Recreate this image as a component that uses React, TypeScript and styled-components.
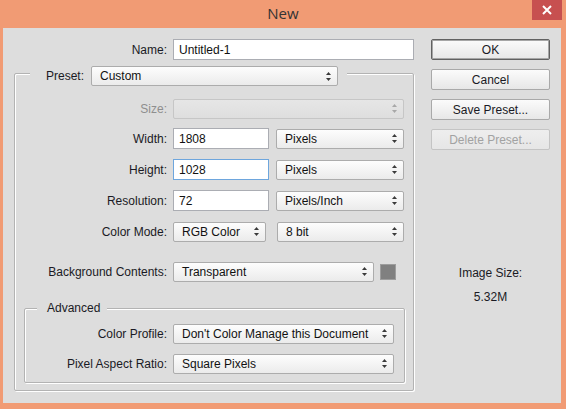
import styled, { createGlobalStyle } from 'styled-components'

const GlobalStyle = createGlobalStyle`
  html, body {
    margin: 0;
    padding: 0;
    background: #f19b74;
  }
  body {
    width: 566px;
    height: 409px;
    overflow: hidden;
    font-family: "Liberation Sans", Arial, sans-serif;
  }
`

const Window = styled.div`
  width: 566px;
  height: 409px;
  background: #f19b74;
  display: flex;
  flex-direction: column;
`

const TitleBar = styled.div`
  height: 28px;
  display: grid;
  grid-template-columns: 1fr auto 1fr;
  align-items: center;
`

const Title = styled.div`
  grid-column: 2;
  font-family: "Open Sans", "Noto Sans", sans-serif;
  font-size: 15px;
  color: #333;
  margin-top: -2px;
`

const CloseButton = styled.div`
  grid-column: 3;
  justify-self: end;
  align-self: start;
  width: 30px;
  height: 20px;
  margin-right: 4px;
  background: #c75050;
  display: flex;
  align-items: center;
  justify-content: center;
`

const Body = styled.div`
  margin: 0 5px 0 3px;
  height: 375px;
  background: #dddddd;
  display: flex;
`

const LeftColumn = styled.div`
  width: 411px;
  padding-top: 11px;
  display: flex;
  flex-direction: column;
`

const NameRow = styled.div`
  margin-left: 11px;
  display: flex;
  align-items: center;
  gap: 6px;
  height: 21px;
`

const Label = styled.div<{ $width: number; $disabled?: boolean }>`
  width: ${p => p.$width}px;
  flex-shrink: 0;
  text-align: right;
  font-size: 12px;
  color: ${p => (p.$disabled ? '#8e8e8e' : '#1a1a24')};
  white-space: nowrap;
`

const TextField = styled.div<{ $width?: number; $focused?: boolean }>`
  box-sizing: border-box;
  ${p => (p.$width ? `width: ${p.$width}px;` : 'flex: 1;')}
  height: 21px;
  background: #fff;
  border: 1px solid ${p => (p.$focused ? '#6ea6dd' : '#abadb3')};
  padding: 0 5px;
  display: flex;
  align-items: center;
  font-size: 12px;
  color: #111;
`

const Select = styled.div<{ $width: number; $disabled?: boolean }>`
  box-sizing: border-box;
  width: ${p => p.$width}px;
  height: 20px;
  border: 1px solid ${p => (p.$disabled ? '#c6c6c6' : '#acacac')};
  border-radius: 2px;
  background: ${p =>
    p.$disabled ? 'linear-gradient(#e6e6e6, #dedede)' : 'linear-gradient(#fdfdfd, #ebebeb)'};
  padding: 0 6px 0 8px;
  display: flex;
  align-items: center;
  justify-content: space-between;
  font-size: 12px;
  color: #111;
  flex-shrink: 0;
`

const Group = styled.div`
  box-sizing: border-box;
  margin: 13px 0 0 11px;
  width: 400px;
  border: 1px solid #b3b3b3;
  border-radius: 2px;
  box-shadow: inset 1px 1px 0 #fff, 1px 1px 0 #fff;
  display: flex;
  flex-direction: column;
  padding-bottom: 7px;
`

const GroupHeader = styled.div`
  align-self: flex-start;
  margin: -8px 0 0 15px;
  padding: 0 9px 0 16px;
  height: 20px;
  background: #dddddd;
  display: flex;
  align-items: center;
  gap: 7px;
`

const HeaderLabel = styled.div`
  font-size: 12px;
  color: #1a1a24;
`

const Row = styled.div<{ $top: number }>`
  margin-top: ${p => p.$top}px;
  height: 21px;
  display: flex;
  align-items: center;
`

const Controls = styled.div<{ $width: number; $spread?: boolean }>`
  width: ${p => p.$width}px;
  margin-left: 6px;
  display: flex;
  align-items: center;
  justify-content: ${p => (p.$spread ? 'space-between' : 'flex-start')};
  gap: 6px;
`

const Swatch = styled.div`
  width: 16px;
  height: 16px;
  box-sizing: border-box;
  background: #808080;
  border: 1px solid #9d9d9d;
`

const SubGroup = styled.div`
  box-sizing: border-box;
  margin: 26px 8px 0 9px;
  border: 1px solid #b3b3b3;
  border-radius: 2px;
  box-shadow: inset 1px 1px 0 #fff, 1px 1px 0 #fff;
  display: flex;
  flex-direction: column;
  padding-bottom: 8px;
`

const SubLegend = styled.div`
  align-self: flex-start;
  margin: -8px 0 0 12px;
  padding: 0 7px 0 10px;
  height: 14px;
  line-height: 14px;
  background: #dddddd;
  font-size: 12px;
  color: #1a1a24;
`

const RightColumn = styled.div`
  padding: 11px 0 0 17px;
  width: 119px;
  display: flex;
  flex-direction: column;
  gap: 9px;
`

const Button = styled.div<{ $primary?: boolean; $disabled?: boolean }>`
  box-sizing: border-box;
  height: 21px;
  border-radius: 2px;
  display: flex;
  align-items: center;
  justify-content: center;
  font-size: 12px;
  color: ${p => (p.$disabled ? '#a2a2a2' : '#1a1a24')};
  background: ${p =>
    p.$disabled ? 'linear-gradient(#eeeeee, #e6e6e6)' : 'linear-gradient(#fbfbfb, #e7e7e7)'};
  border: 1px solid ${p => (p.$primary ? '#616161' : p.$disabled ? '#c4c4c4' : '#a9a9a9')};
  box-shadow: ${p => (p.$primary ? 'inset 0 0 0 1px #a6a6a6' : 'none')};
`

const ImageSize = styled.div`
  margin-top: 107px;
  display: flex;
  flex-direction: column;
  align-items: center;
  gap: 10px;
  font-size: 12px;
  color: #1a1a24;
  line-height: 14px;
`

const Arrows = ({ disabled }: { disabled?: boolean }) => (
  <svg width="5" height="9" viewBox="0 0 5 9">
    <polygon points="2.5,0 5,3 0,3" fill={disabled ? '#a8a8a8' : '#3a3a3a'} />
    <polygon points="0,6 5,6 2.5,9" fill={disabled ? '#a8a8a8' : '#3a3a3a'} />
  </svg>
)

const Dropdown = ({ width, value, disabled }: { width: number; value?: string; disabled?: boolean }) => (
  <Select $width={width} $disabled={disabled}>
    <span>{value}</span>
    <Arrows disabled={disabled} />
  </Select>
)

export default function App() {
  return (
    <Window>
      <GlobalStyle />
      <TitleBar>
        <Title>New</Title>
        <CloseButton>
          <svg width="10" height="10" viewBox="0 0 10 10">
            <path d="M1 1 L9 9 M9 1 L1 9" stroke="#fff" strokeWidth="2" />
          </svg>
        </CloseButton>
      </TitleBar>
      <Body>
        <LeftColumn>
          <NameRow>
            <Label $width={153}>Name:</Label>
            <TextField>Untitled-1</TextField>
          </NameRow>
          <Group>
            <GroupHeader>
              <HeaderLabel>Preset:</HeaderLabel>
              <Dropdown width={247} value="Custom" />
            </GroupHeader>
            <Row $top={12}>
              <Label $width={152} $disabled>Size:</Label>
              <Controls $width={231}>
                <Dropdown width={231} disabled />
              </Controls>
            </Row>
            <Row $top={9}>
              <Label $width={152}>Width:</Label>
              <Controls $width={231} $spread>
                <TextField $width={96}>1808</TextField>
                <Dropdown width={128} value="Pixels" />
              </Controls>
            </Row>
            <Row $top={10}>
              <Label $width={152}>Height:</Label>
              <Controls $width={231} $spread>
                <TextField $width={96} $focused>1028</TextField>
                <Dropdown width={128} value="Pixels" />
              </Controls>
            </Row>
            <Row $top={10}>
              <Label $width={152}>Resolution:</Label>
              <Controls $width={231} $spread>
                <TextField $width={96}>72</TextField>
                <Dropdown width={128} value="Pixels/Inch" />
              </Controls>
            </Row>
            <Row $top={10}>
              <Label $width={152}>Color Mode:</Label>
              <Controls $width={231} $spread>
                <Dropdown width={93} value="RGB Color" />
                <Dropdown width={127} value="8 bit" />
              </Controls>
            </Row>
            <Row $top={19}>
              <Label $width={152}>Background Contents:</Label>
              <Controls $width={231}>
                <Dropdown width={201} value="Transparent" />
                <Swatch />
              </Controls>
            </Row>
            <SubGroup>
              <SubLegend>Advanced</SubLegend>
              <Row $top={8}>
                <Label $width={142}>Color Profile:</Label>
                <Controls $width={221}>
                  <Dropdown width={221} value="Don't Color Manage this Document" />
                </Controls>
              </Row>
              <Row $top={9}>
                <Label $width={142}>Pixel Aspect Ratio:</Label>
                <Controls $width={221}>
                  <Dropdown width={221} value="Square Pixels" />
                </Controls>
              </Row>
            </SubGroup>
          </Group>
        </LeftColumn>
        <RightColumn>
          <Button $primary>OK</Button>
          <Button>Cancel</Button>
          <Button>Save Preset...</Button>
          <Button $disabled>Delete Preset...</Button>
          <ImageSize>
            <div>Image Size:</div>
            <div>5.32M</div>
          </ImageSize>
        </RightColumn>
      </Body>
    </Window>
  )
}
